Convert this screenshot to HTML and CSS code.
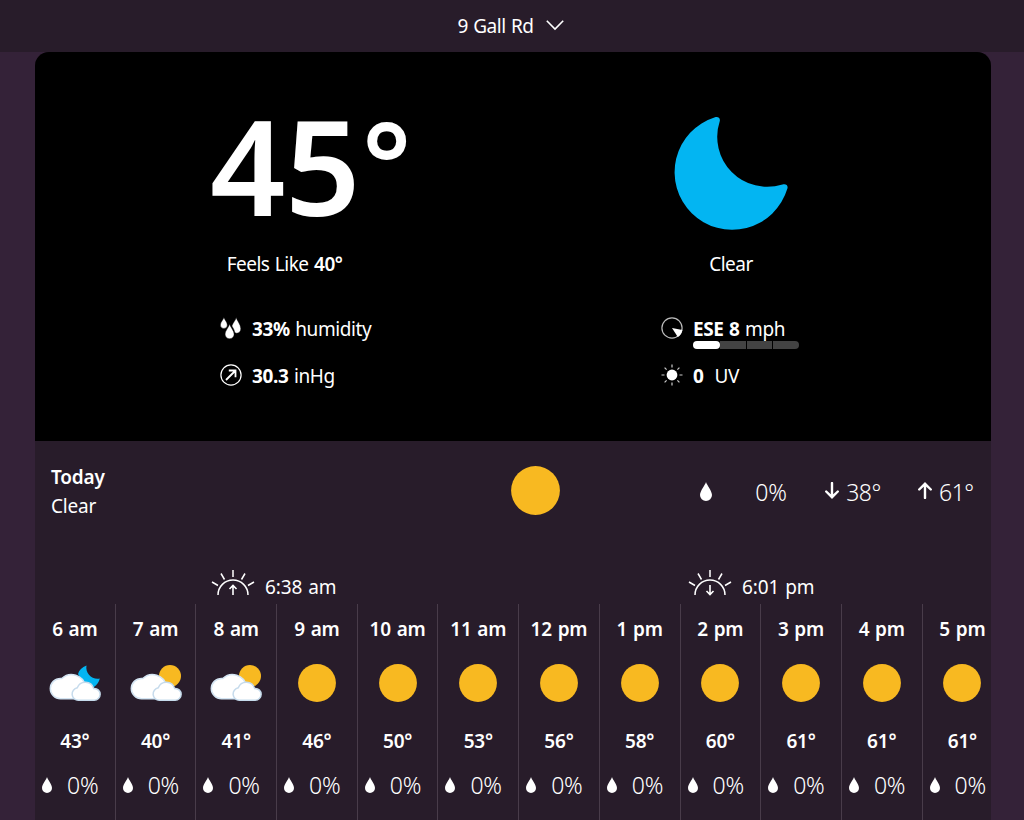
FILE: index.html
```
<!DOCTYPE html>
<html lang="en">
<head>
    <meta charset="UTF-8">
    <meta name="viewport" content="width=device-width, initial-scale=1.0">
    <title>Weather - 9 Gall Rd</title>
    <link rel="stylesheet" href="styles.css">
</head>
<body>

    <!-- shared icons -->
    <svg class="defs" width="0" height="0">
        <symbol id="drop" viewBox="0 0 12 19">
            <path d="M6 0C6.6 2.6 12 9 12 13a6 6 0 0 1-12 0C0 9 5.4 2.6 6 0z" fill="#fff"/>
        </symbol>
        <symbol id="sun" viewBox="0 0 50 50">
            <circle cx="25" cy="25" r="24.900" fill="#f8b921"/>
        </symbol>
        <symbol id="clouds" viewBox="0 0 52 38">
            <path d="M11.500 34.800a10.200 10.200 0 0 1 0-20.400c.4 0 .9 0 1.300.1a14 14 0 0 1 23.500 7.300l2 13z" fill="#fff" stroke="#d3e4f2" stroke-width="1.500"/>
            <path d="M29.500 36.300a6.300 6.300 0 0 1-1.200-12.500 8.600 8.600 0 0 1 16.300.6h.6a5.950 5.950 0 0 1 0 11.900z" fill="#fff" stroke="#c6dbec" stroke-width="1.500"/>
        </symbol>
        <symbol id="cloudy-day" viewBox="0 0 52 38">
            <circle cx="40" cy="12" r="11" fill="#f8b921"/>
            <use href="#clouds" width="52" height="38"/>
        </symbol>
        <symbol id="cloudy-night" viewBox="0 0 52 38">
            <path d="M37.500 1.400C33 3 30 6 29 10l8 13h8c3-2 5-5 5.800-8.500C43 16 36 9 37.500 1.400z" fill="#03b5f2"/>
            <use href="#clouds" width="52" height="38"/>
        </symbol>
        <symbol id="horizon" viewBox="0 0 44 27">
            <path d="M7 26a15 15 0 0 1 30 0M22 1v7M10 4.500l3.500 6M34 4.500l-3.500 6M1 13l6 3.500M43 13l-6 3.500" fill="none" stroke="#fff" stroke-width="1.500"/>
        </symbol>
    </svg>

    <header class="location">
        <span>9 Gall Rd</span>
        <svg class="chevron" viewBox="0 0 18 11"><path d="M.8.8L9 9l8.200-8.200" fill="none" stroke="#fff" stroke-width="1.600"/></svg>
    </header>

    <main class="weather">
        <section class="current">
            <div class="current-col">
                <div class="temp">45<span class="deg">°</span></div>
                <p class="summary feels">Feels Like <strong>40°</strong></p>
                <div class="detail">
                    <svg viewBox="0 0 22 22">
                        <path d="M3.900.5C4.300 2.500 7.300 5 7.300 8a3.400 3.400 0 0 1-6.900 0C.4 5 3.500 2.500 3.900.5zM16.200.5c.4 2.500 4.600 7 4.600 11.300 0 2.500-1.700 4.400-4 4.400-.7 0-1.500-.3-2.100-1-.3-2.500-2-4.700-2.800-6.200C12.800 6 15.800 3 16.200.5zM9.600 7c.5 2.800 4.500 6.600 4.500 10.200a4.500 4.500 0 0 1-9 0c0-3.600 4-7.400 4.500-10.200z" fill="#fff" stroke="#000" stroke-width=".4"/>
                    </svg>
                    <span><strong>33%</strong> humidity</span>
                </div>
                <div class="detail">
                    <svg viewBox="0 0 22 22" fill="none" stroke="#fff">
                        <circle cx="11" cy="11" r="10.100" stroke-width="1.200"/>
                        <path d="M6 16l9-9M8.800 6.500h6.700v6.700" stroke-width="1.800"/>
                    </svg>
                    <span><strong>30.3</strong> inHg</span>
                </div>
            </div>
            <div class="current-col current-sky">
                <svg class="moon" viewBox="0 0 115 115">
                    <path d="M41 1.200C44 .3 46.400 2 45.800 5A50 50 0 0 0 108.500 68.400c3.500-.9 5.800.8 4.900 4.200A57.600 57.600 0 1 1 41 1.200z" fill="#03b5f2"/>
                </svg>
                <p class="summary">Clear</p>
                <div class="detail">
                    <svg viewBox="0 0 22 22">
                        <circle cx="11" cy="11" r="10.100" fill="none" stroke="#bbb" stroke-width="1.200"/>
                        <path d="M11 11l10.400 2a10.500 10.500 0 0 1-4.600 7z" fill="#fff"/>
                    </svg>
                    <div class="wind">
                        <span><strong>ESE 8</strong> mph</span>
                        <div class="wind-bar"><i class="on"></i><i></i><i></i><i></i></div>
                    </div>
                </div>
                <div class="detail uv">
                    <svg viewBox="0 0 22 22">
                        <circle cx="11" cy="11" r="5.400" fill="#fff"/>
                        <path d="M11 .5v3M11 18.500v3M.5 11h3M18.500 11h3M3.600 3.600l2 2M16.400 16.400l2 2M3.600 18.400l2-2M16.400 5.600l2-2" stroke="#ccc" stroke-width="1.200"/>
                    </svg>
                    <span><strong>0</strong>&nbsp; UV</span>
                </div>
            </div>
        </section>

        <section class="today">
            <div class="today-text">
                <strong>Today</strong>
                <span>Clear</span>
            </div>
            <svg class="today-icon"><use href="#sun"/></svg>
            <svg class="today-drop"><use href="#drop"/></svg>
            <span class="today-rain">0%</span>
            <span class="low"><svg class="arrow" viewBox="0 0 14 17"><path d="M7 1v14M1.200 9.500L7 15.200l5.800-5.700"/></svg>38°</span>
            <span class="high"><svg class="arrow" viewBox="0 0 14 17"><path d="M7 16V2M1.200 7.500L7 1.800l5.800 5.700"/></svg>61°</span>
        </section>

        <section class="sun-times">
            <div>
                <svg viewBox="0 0 44 27"><use href="#horizon"/><path d="M22 26v-9M18.500 20l3.500-3.500 3.500 3.500" fill="none" stroke="#fff" stroke-width="1.600"/></svg>
                <span>6:38 am</span>
            </div>
            <div>
                <svg viewBox="0 0 44 27"><use href="#horizon"/><path d="M22 16v9M18.500 22l3.500 3.500 3.500-3.500" fill="none" stroke="#fff" stroke-width="1.600"/></svg>
                <span>6:01 pm</span>
            </div>
        </section>

        <section class="hours">
            <div class="hour">
                <strong>6 am</strong>
                <svg class="cloud"><use href="#cloudy-night"/></svg>
                <strong>43°</strong>
                <div class="rain"><svg><use href="#drop"/></svg>0%</div>
            </div>
            <div class="hour">
                <strong>7 am</strong>
                <svg class="cloud"><use href="#cloudy-day"/></svg>
                <strong>40°</strong>
                <div class="rain"><svg><use href="#drop"/></svg>0%</div>
            </div>
            <div class="hour">
                <strong>8 am</strong>
                <svg class="cloud"><use href="#cloudy-day"/></svg>
                <strong>41°</strong>
                <div class="rain"><svg><use href="#drop"/></svg>0%</div>
            </div>
            <div class="hour">
                <strong>9 am</strong>
                <svg class="sun"><use href="#sun"/></svg>
                <strong>46°</strong>
                <div class="rain"><svg><use href="#drop"/></svg>0%</div>
            </div>
            <div class="hour">
                <strong>10 am</strong>
                <svg class="sun"><use href="#sun"/></svg>
                <strong>50°</strong>
                <div class="rain"><svg><use href="#drop"/></svg>0%</div>
            </div>
            <div class="hour">
                <strong>11 am</strong>
                <svg class="sun"><use href="#sun"/></svg>
                <strong>53°</strong>
                <div class="rain"><svg><use href="#drop"/></svg>0%</div>
            </div>
            <div class="hour">
                <strong>12 pm</strong>
                <svg class="sun"><use href="#sun"/></svg>
                <strong>56°</strong>
                <div class="rain"><svg><use href="#drop"/></svg>0%</div>
            </div>
            <div class="hour">
                <strong>1 pm</strong>
                <svg class="sun"><use href="#sun"/></svg>
                <strong>58°</strong>
                <div class="rain"><svg><use href="#drop"/></svg>0%</div>
            </div>
            <div class="hour">
                <strong>2 pm</strong>
                <svg class="sun"><use href="#sun"/></svg>
                <strong>60°</strong>
                <div class="rain"><svg><use href="#drop"/></svg>0%</div>
            </div>
            <div class="hour">
                <strong>3 pm</strong>
                <svg class="sun"><use href="#sun"/></svg>
                <strong>61°</strong>
                <div class="rain"><svg><use href="#drop"/></svg>0%</div>
            </div>
            <div class="hour">
                <strong>4 pm</strong>
                <svg class="sun"><use href="#sun"/></svg>
                <strong>61°</strong>
                <div class="rain"><svg><use href="#drop"/></svg>0%</div>
            </div>
            <div class="hour">
                <strong>5 pm</strong>
                <svg class="sun"><use href="#sun"/></svg>
                <strong>61°</strong>
                <div class="rain"><svg><use href="#drop"/></svg>0%</div>
            </div>
        </section>
    </main>

</body>
</html>
```

FILE: styles.css
```
* { box-sizing: border-box; }
body { margin: 0; height: 820px; overflow: hidden; background: #342238; color: #fff; font: 19px/26px "Segoe UI", "Noto Sans", "Open Sans", sans-serif; letter-spacing: -0.5px; word-spacing: 1px; }
p { margin: 0; }
svg { display: block; flex: none; }
strong { font-weight: 600; }
.defs { position: absolute; }

.location { height: 52px; background: #281c2a; display: flex; justify-content: center; align-items: center; gap: 12px; padding-right: 3px; }
.chevron { width: 18px; height: 11px; margin-top: -1px; }

.weather { width: 956px; height: 768px; margin-left: 35px; background: #281c2a; border-radius: 14px 14px 0 0; overflow: hidden; }

/* current conditions */
.current { height: 389px; background: #000; display: grid; grid-template-columns: 478px 478px; }
.current-col { padding: 64px 0 0 185px; }
.current-sky { padding-left: 148px; }
.temp { height: 135px; font-size: 132px; line-height: 99px; font-weight: 600; letter-spacing: -0.5px; margin-left: -10px; white-space: nowrap; }
.deg { font-size: 116px; line-height: 0; vertical-align: 10px; margin-left: 2px; }
.moon { width: 115px; height: 115px; margin: 0 0 20px 13px; }
.summary { width: 140px; height: 26px; text-align: center; margin-bottom: 39px; }
.feels { width: 129px; }
.detail { display: flex; gap: 10px; height: 47px; white-space: nowrap; letter-spacing: -0.4px; }
.detail > svg { width: 22px; height: 22px; margin-top: 1px; }
.detail strong { font-weight: 700; }
.wind-bar { display: flex; gap: 1px; width: 106px; height: 8px; margin-top: -1px; border-radius: 4px; overflow: hidden; }
.wind-bar i { flex: 1; background: #434343; }
.wind-bar .on { flex: 0 0 27px; margin-right: -1px; background: #fff; border-radius: 0 4px 4px 0; }

/* today row */
.today { height: 101px; display: flex; align-items: center; padding: 0 16px; font-size: 23px; font-weight: 350; letter-spacing: -0.2px; }
.today-text { width: 461px; padding-top: 1px; font-size: 19px; font-weight: 400; line-height: 29px; display: flex; flex-direction: column; }
.today-icon { width: 49px; height: 49px; margin-top: -2px; }
.today-drop { width: 12px; height: 19px; margin-left: 140px; }
.today-rain { width: 34px; margin-left: 43px; }
.low, .high { display: flex; align-items: center; gap: 7px; width: 57px; margin-left: 36px; letter-spacing: -0.5px; }
.arrow { width: 14px; height: 17px; margin-top: -2px; fill: none; stroke: #fff; stroke-width: 2.4; stroke-linecap: round; }

.sun-times { height: 62px; display: grid; grid-template-columns: 477px 477px; letter-spacing: -0.1px; }
.sun-times div { display: flex; align-items: flex-end; gap: 10px; height: 58px; padding-left: 176px; }
.sun-times svg { width: 44px; height: 27px; margin-bottom: 4px; }

/* hourly forecast */
.hours { display: grid; grid-auto-flow: column; grid-auto-columns: 80.7px; height: 216px; }
.hour { border-right: 1px solid #493c4a; padding-top: 12px; display: flex; flex-direction: column; align-items: center; white-space: nowrap; letter-spacing: -0.2px; }
.hour .sun, .hour .cloud { height: 38px; margin: 22px 0 26px; }
.hour .sun { width: 38px; }
.hour .cloud { width: 52px; }
.rain { display: flex; align-items: center; gap: 15px; margin-top: 18px; align-self: flex-start; padding-left: 7px; font-size: 23px; font-weight: 350; }
.rain svg { width: 10px; height: 16px; }
```
